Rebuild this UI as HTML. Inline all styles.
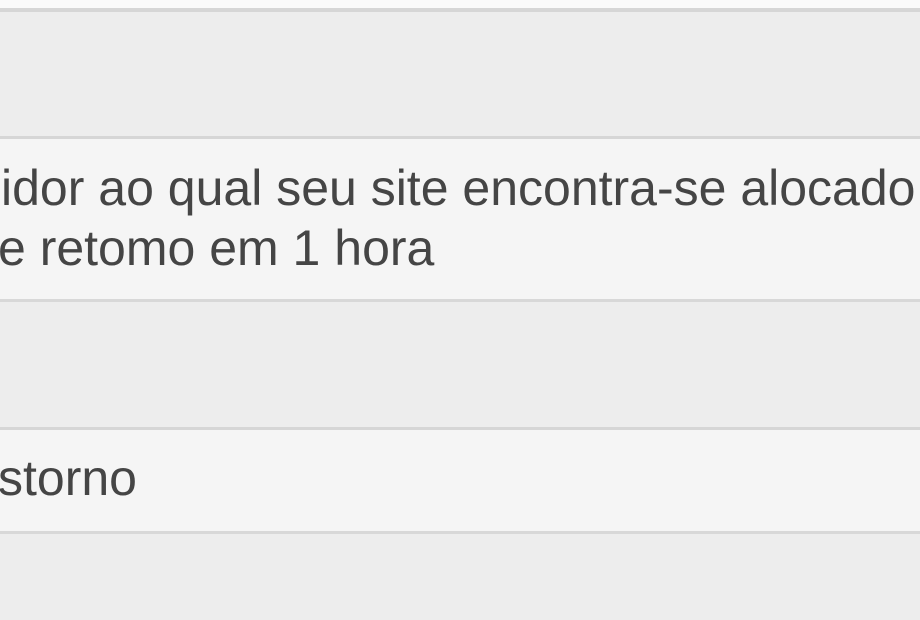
<!DOCTYPE html>
<html><head><meta charset="utf-8"><style>
html,body{margin:0;padding:0}
body{width:920px;height:620px;position:relative;overflow:hidden;background:#ececec;font-family:"Liberation Sans",Arial,sans-serif;color:#454545}
.b{position:absolute;left:0;width:920px}
.t{position:absolute;font-size:50px;line-height:50px;white-space:nowrap}
</style></head><body>
<div class="b" style="top:0;height:8px;background:#fafafa"></div>
<div class="b" style="top:8px;height:4px;background:#d6d6d6"></div>
<div class="b" style="top:12px;height:124px;background:#ededed"></div>
<div class="b" style="top:136px;height:3px;background:#d6d6d6"></div>
<div class="b" style="top:139px;height:160px;background:#f5f5f5"></div>
<div class="b" style="top:299px;height:3px;background:#d8d8d8"></div>
<div class="b" style="top:302px;height:125px;background:#ededed"></div>
<div class="b" style="top:427px;height:3px;background:#d6d6d6"></div>
<div class="b" style="top:430px;height:101px;background:#f5f5f5"></div>
<div class="b" style="top:531px;height:3px;background:#d8d8d8"></div>
<div class="b" style="top:534px;height:86px;background:#ededed"></div>
<div class="t" style="left:1px;top:163px">idor ao qual seu site encontra-se alocado</div>
<div class="t" style="left:-2px;top:223px">e retomo em 1 hora</div>
<div class="t" style="left:-2px;top:453px">storno</div>
</body></html>
